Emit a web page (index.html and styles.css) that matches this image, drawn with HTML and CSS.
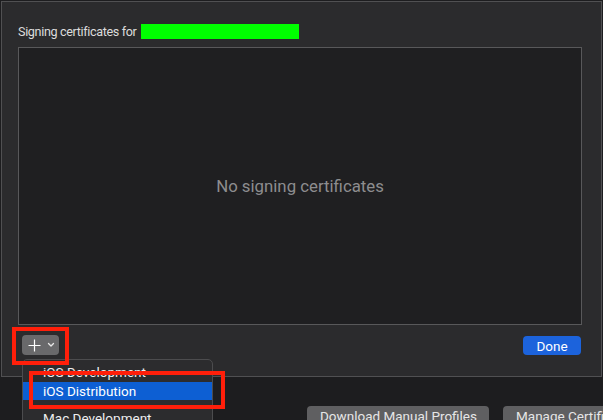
FILE: index.html
```html
<!DOCTYPE html>
<html>
<head>
<meta charset="utf-8">
<link rel="stylesheet" href="styles.css">
</head>
<body>
<div class="screen">
  <div class="sheet">
    <div class="title">Signing certificates for <span class="redact"></span></div>
    <div class="list"><span class="empty">No signing certificates</span></div>
    <div class="footer">
      <button class="add">
        <svg width="13" height="13" viewBox="0 0 13 13"><path d="M6.5 0.5v12M0.5 6.5h12" stroke="#fff" stroke-width="1.2" fill="none"/></svg>
        <svg width="8" height="6" viewBox="0 0 8 6"><path d="M1.5 1.5L4 4 6.5 1.5" stroke="#e8e8e8" stroke-width="1.3" fill="none" stroke-linecap="round" stroke-linejoin="round"/></svg>
      </button>
      <button class="done">Done</button>
    </div>
  </div>
  <div class="bottom-bar">
    <button class="gray">Download Manual Profiles</button>
    <button class="gray">Manage Certificates…</button>
  </div>
  <div class="menu">
    <div class="item">iOS Development</div>
    <div class="item sel">iOS Distribution</div>
    <div class="sep"></div>
    <div class="item">Mac Development</div>
  </div>
  <div class="mark mark-add"></div>
  <div class="mark mark-item"></div>
</div>
</body>
</html>
```

FILE: styles.css
```css
* { box-sizing: border-box; }
html, body { margin: 0; padding: 0; }
body { background: #1d1d1f; font-family: "Roboto", "Liberation Sans", sans-serif; }
.screen { position: relative; width: 603px; height: 420px; overflow: hidden; background: #1d1d1f; padding: 1px 0 0 1px; }
.sheet {
  width: 601px; height: 376px;
  background: #2b2b2d;
  border: 1px solid #505052;
  padding: 0 19px 0 16px;
  display: flex; flex-direction: column;
}
.title { color: #dcdcdc; font-size: 12.6px; letter-spacing: -0.35px; height: 45px; padding-top: 22px; display: flex; align-items: flex-start; gap: 4px; line-height: 15px; }
.redact { display: inline-block; width: 158px; height: 15px; background: #00ff00; }
.list {
  height: 278px;
  background: #1f1f21;
  border: 1px solid #58585a;
  display: flex; align-items: center; justify-content: center;
}
.empty { color: #8d8d8f; font-size: 16.8px; margin-top: -1px; }
.footer { display: flex; justify-content: space-between; align-items: flex-start; padding: 10px 1px 0 4px; }
.add {
  width: 37px; height: 20px; border: none; border-radius: 4px;
  background: #69696b; display: flex; align-items: center; padding: 0 0 0 6px; gap: 6px;
}
.done {
  width: 58px; height: 19px; border: none; border-radius: 4px; margin-top: 1px;
  background: #1c63dc; color: #fff; font-family: inherit; font-size: 13.5px; padding: 0;
}
.bottom-bar { display: flex; gap: 14px; padding: 29px 0 0 306px; }
.gray {
  flex: none; height: 20px; border: none; border-radius: 4px; background: #5f5f61;
  color: #e6e6e6; font-family: inherit; font-size: 13.5px; padding: 0 13px; white-space: nowrap;
}
.gray:first-child { width: 182px; }
.menu {
  position: absolute; left: 22px; top: 359px; width: 191px; height: 80px;
  background: #2c2c2e; border: 1px solid #4c4c4e; border-radius: 5px;
  padding-top: 3px;
}
.item { height: 19px; line-height: 19px; color: #eee; font-size: 13.5px; padding-left: 20px; }
.item.sel { background: #0d5fd3; color: #fff; height: 18px; line-height: 18px; }
.sep { height: 9px; }
.mark { position: absolute; border: 4px solid #ff1f0a; }
.mark-add { left: 12px; top: 327px; width: 57px; height: 38px; }
.mark-item { left: 29px; top: 371px; width: 196px; height: 38px; }
```
